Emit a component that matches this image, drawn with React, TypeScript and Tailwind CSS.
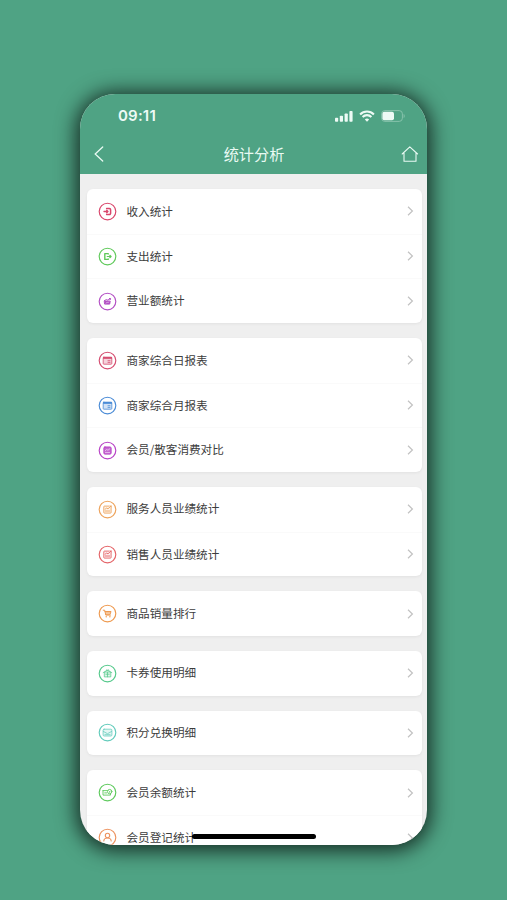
import type { ReactNode } from "react";

type Glyph =
  | "in"
  | "out"
  | "revenue"
  | "calendar"
  | "chart"
  | "report"
  | "cart"
  | "gift"
  | "mail"
  | "wallet"
  | "user";

type Item = { label: string; color: string; glyph: Glyph };

const groups: Item[][] = [
  [
    { label: "收入统计", color: "#d9476c", glyph: "in" },
    { label: "支出统计", color: "#5fc95a", glyph: "out" },
    { label: "营业额统计", color: "#b34fc4", glyph: "revenue" },
  ],
  [
    { label: "商家综合日报表", color: "#d54d70", glyph: "calendar" },
    { label: "商家综合月报表", color: "#4a8bd6", glyph: "calendar" },
    { label: "会员/散客消费对比", color: "#b843c6", glyph: "chart" },
  ],
  [
    { label: "服务人员业绩统计", color: "#eda35c", glyph: "report" },
    { label: "销售人员业绩统计", color: "#e46468", glyph: "report" },
  ],
  [{ label: "商品销量排行", color: "#ee9a50", glyph: "cart" }],
  [{ label: "卡券使用明细", color: "#56c98c", glyph: "gift" }],
  [{ label: "积分兑换明细", color: "#62cbbb", glyph: "mail" }],
  [
    { label: "会员余额统计", color: "#5fca5e", glyph: "wallet" },
    { label: "会员登记统计", color: "#ed9360", glyph: "user" },
  ],
];

const glyphs: Record<Glyph, ReactNode> = {
  in: (
    <g strokeWidth="1.5">
      <path d="M8.6 6.5h2.8a1.2 1.2 0 0 1 1.2 1.2v3.6a1.2 1.2 0 0 1-1.2 1.2H8.6" />
      <path d="M6 9.5h4M8.7 8.2l1.3 1.3-1.3 1.3" strokeWidth="1.3" />
    </g>
  ),
  out: (
    <g strokeWidth="1.4">
      <path d="M10.2 7v-.4H6.8v5.8h3.4V12" />
      <path d="M9.2 9.5H13M11.8 8.3l1.3 1.2-1.3 1.2" strokeWidth="1.2" />
    </g>
  ),
  revenue: (
    <g>
      <path d="M6.6 9.1h5.6l-.5 3H7z" fill="currentColor" />
      <path d="m6.4 8.6 2-1 1.4.5 2.5-1.4M11.4 6.5h1v1" />
      <path d="m8 11.2 1.1-1 .9.5 1-.9" stroke="white" strokeWidth=".45" />
    </g>
  ),
  calendar: (
    <g>
      <rect x="5.2" y="6.2" width="8.6" height="7" rx=".6" fill="currentColor" fillOpacity=".25" strokeWidth=".8" />
      <path d="M5.1 6.9h8.8" strokeWidth="1.9" strokeLinecap="butt" />
      <path d="M10 9.7h2M10 11.4h2" strokeWidth=".8" />
    </g>
  ),
  chart: (
    <g>
      <rect x="5.9" y="6" width="7.2" height="7.1" rx="1" fill="currentColor" fillOpacity=".8" />
      <path d="m7.2 9.7 1.3-1.1 1.5.6 1.8-1.4M7.4 11.6h4.2" stroke="white" strokeWidth=".55" />
    </g>
  ),
  report: (
    <g strokeWidth=".9">
      <path d="M10.8 6.1H6.4a.6.6 0 0 0-.6.6v5.8c0 .4.2.6.6.6h6.1c.4 0 .6-.2.6-.6V8" fill="currentColor" fillOpacity=".12" />
      <path d="m7.1 9.2 1.5-1.1 1.4.7L13.1 6M11.8 6h1.4v1.4M7.3 11h4.3" />
    </g>
  ),
  cart: (
    <g>
      <path d="M5.2 6.2h1.5l1.1 4.9h4.7M7 7.5h6l-.9 2.8H7.7" />
      <path d="M7.1 7.8h5.6l-.6 1.9H7.6z" fill="currentColor" stroke="none" fillOpacity=".6" />
      <circle cx="8.2" cy="12.8" r=".7" fill="currentColor" stroke="none" />
      <circle cx="11.9" cy="12.8" r=".7" fill="currentColor" stroke="none" />
    </g>
  ),
  gift: (
    <g strokeWidth=".75">
      <path d="m5.2 8.6 4.2-2.3 4.4 2.3" />
      <path d="M6.3 8.4v4.5h6.5V8.4z" fill="currentColor" fillOpacity=".2" />
      <path d="M9.5 8.3v4.5M7.8 10.2h3.5M8.2 6.5c-.1-1.2 1.1-1 1.3 0 .3-1 1.6-1.1 1.5 0" />
    </g>
  ),
  mail: (
    <g strokeWidth=".75">
      <rect x="5.1" y="6.2" width="8.8" height="6.8" rx="1" fill="currentColor" fillOpacity=".18" />
      <path d="m5.5 8.5 4 2.2 4-2.2M6.9 11.7h5.2" />
    </g>
  ),
  wallet: (
    <g strokeWidth=".9">
      <path d="M5 7.6h4.5M5 7.6v4.5h7.5v-1.4M6.7 9.9h1.9" />
      <circle cx="11.7" cy="8.6" r="2.2" fill="white" />
      <path d="m10.9 7.9.8.8.8-.8M11.7 8.7v1" strokeWidth=".65" />
    </g>
  ),
  user: (
    <g strokeWidth="1.1">
      <circle cx="9.5" cy="7.5" r="2.2" />
      <path d="M5.8 13c.1-2 1.4-3 3.7-3s3.6 1 3.7 3" />
    </g>
  ),
};

function RowIcon({ glyph, color }: { glyph: Glyph; color: string }) {
  return (
    <svg
      viewBox="0 0 19 19"
      className="size-[19px] shrink-0"
      style={{ color }}
      fill="none"
      stroke="currentColor"
      strokeLinecap="round"
      strokeLinejoin="round"
    >
      <circle cx="9.5" cy="9.5" r="8.3" strokeWidth="1.15" />
      {glyphs[glyph]}
    </svg>
  );
}

function Row({ item, divided }: { item: Item; divided: boolean }) {
  return (
    <li className={`flex h-[44.67px] shrink-0 items-center pr-2 pl-[11.5px] ${divided ? "border-t border-[#fafafa]" : ""}`}>
      <RowIcon glyph={item.glyph} color={item.color} />
      <span className="ml-[9.5px] flex-1 text-[11.6px] leading-none whitespace-nowrap text-[#3c3c3c]">
        {item.label}
      </span>
      <svg viewBox="0 0 7 10" className="h-[10px] w-[7px]" fill="none" stroke="#c2c2c2" strokeWidth="1.2">
        <path d="m1 .8 4.4 4.2L1 9.2" />
      </svg>
    </li>
  );
}

function StatusBar() {
  return (
    <div className="flex h-11 items-center justify-between pr-[22px] pl-[38px] text-[#edfaf5]">
      <span className="font-['Inter','Liberation_Sans',sans-serif] text-[15px] leading-none font-semibold tracking-[0.2px]">
        09:11
      </span>
      <div className="flex items-center gap-[7px]">
        <svg viewBox="0 0 18 12" className="h-3 w-[18px]" fill="currentColor">
          <rect x="0" y="7.8" width="3.2" height="4" rx=".8" />
          <rect x="4.8" y="5.8" width="3.2" height="6" rx=".8" />
          <rect x="9.6" y="3.4" width="3.2" height="8.4" rx=".8" />
          <rect x="14.4" y="1" width="3.2" height="10.8" rx=".8" />
        </svg>
        <svg viewBox="0 0 16 12" className="-ml-px h-3 w-4" fill="none" stroke="currentColor" strokeWidth="2.1">
          <path d="M1.1 4.4a9.8 9.8 0 0 1 13.8 0M3.6 7a6.2 6.2 0 0 1 8.8 0" />
          <path d="M8 11.7 5.8 9.5a3.1 3.1 0 0 1 4.4 0z" fill="currentColor" stroke="none" />
        </svg>
        <svg viewBox="0 0 24 12" className="-ml-px h-3 w-6">
          <rect x=".6" y=".6" width="20.8" height="10.8" rx="3.2" fill="none" stroke="#86c2ab" />
          <rect x="1.4" y="1.8" width="11.6" height="8.4" rx="1.9" fill="currentColor" />
          <path d="M22.6 4c1.5.7 1.5 3.3 0 4z" fill="#86c2ab" />
        </svg>
      </div>
    </div>
  );
}

export default function App() {
  return (
    <main className="flex h-[900px] w-full justify-center overflow-hidden bg-[#4fa384] pt-[93.5px] font-['Noto_Sans_CJK_SC',sans-serif]">
      <div className="relative flex h-[751px] w-[347px] flex-col overflow-clip rounded-[35px] bg-[#efefef] shadow-[0_2px_20px_4px_rgba(0,0,0,0.72)]">
        <header className="h-[80.5px] shrink-0 bg-[#4fa384] text-[#e9faf3]">
          <StatusBar />
          <nav className="flex h-[33px] items-center justify-between pr-2 pl-[14px]">
            <svg viewBox="0 0 10 16" className="mr-[3px] h-4 w-[10px]" fill="none" stroke="currentColor" strokeWidth="1.3" strokeLinecap="round">
              <path d="M8.7 1 1.2 8.1 8.7 15" />
            </svg>
            <h1 className="pb-px text-[15.2px] leading-none font-normal">统计分析</h1>
            <svg viewBox="0 0 18 18" className="size-[18px]" fill="none" stroke="currentColor" strokeWidth="1.1" strokeLinecap="round" strokeLinejoin="round">
              <path d="m1.2 9 7.6-7.2L16.6 9M3 8.2v8.1h3.8M11 16.3h4V8.2M6.8 16.3H11" />
            </svg>
          </nav>
        </header>
        <div className="flex flex-col gap-[15px] pt-[15px] pr-[5px] pl-[6.5px]">
          {groups.map((items) => (
            <ul key={items[0].label} className="shrink-0 rounded-[6px] bg-white shadow-[0_1px_3px_rgba(0,0,0,0.06)]">
              {items.map((item, index) => (
                <Row key={item.label} item={item} divided={index > 0} />
              ))}
            </ul>
          ))}
        </div>
        <div className="absolute bottom-[6px] left-[112px] h-[4.5px] w-[124px] rounded-full bg-black" />
      </div>
    </main>
  );
}
